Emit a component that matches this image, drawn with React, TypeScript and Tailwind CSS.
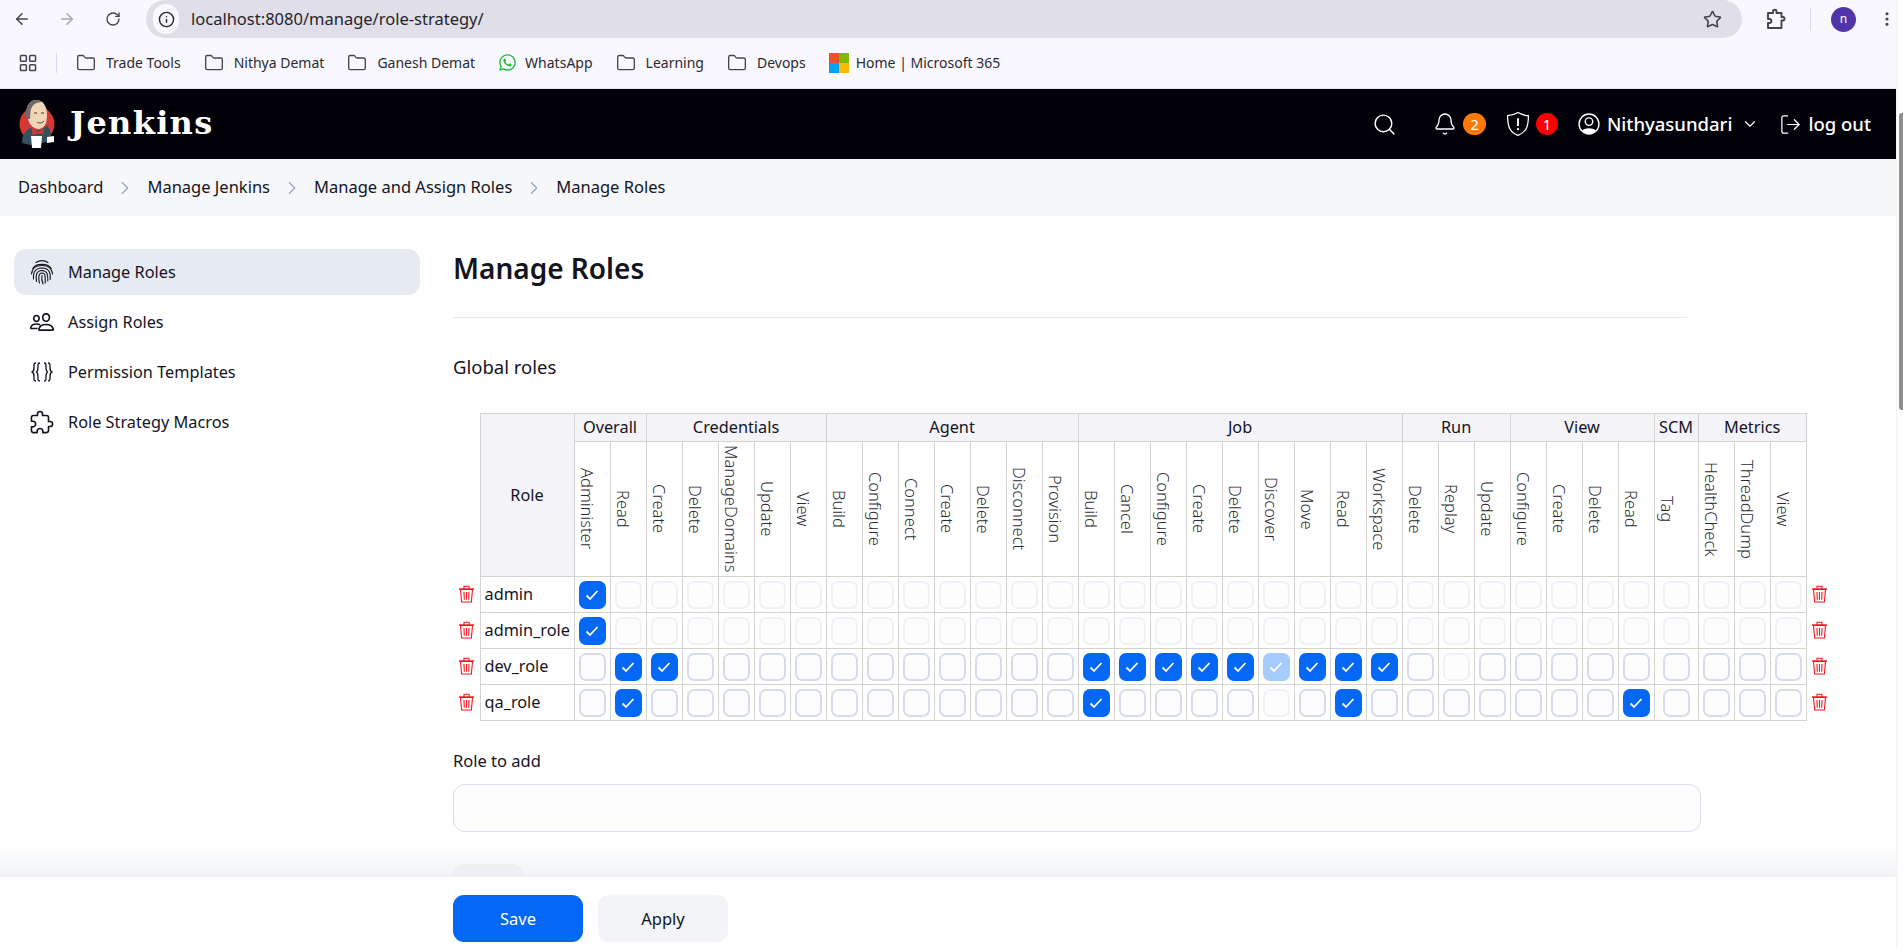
import { Search, Bell, ChevronDown, ChevronRight, LogOut, ArrowLeft, ArrowRight, RotateCw, Star, EllipsisVertical, Info, Folder, LayoutGrid } from "lucide-react";
import { FaWhatsapp } from "react-icons/fa";

type Cell = "on" | "off" | "faded" | "onFaded";

type Group = {
  readonly name: string;
  readonly perms: readonly string[];
};

const groups: readonly Group[] = [
  { name: "Overall", perms: ["Administer", "Read"] },
  { name: "Credentials", perms: ["Create", "Delete", "ManageDomains", "Update", "View"] },
  { name: "Agent", perms: ["Build", "Configure", "Connect", "Create", "Delete", "Disconnect", "Provision"] },
  { name: "Job", perms: ["Build", "Cancel", "Configure", "Create", "Delete", "Discover", "Move", "Read", "Workspace"] },
  { name: "Run", perms: ["Delete", "Replay", "Update"] },
  { name: "View", perms: ["Configure", "Create", "Delete", "Read"] },
  { name: "SCM", perms: ["Tag"] },
  { name: "Metrics", perms: ["HealthCheck", "ThreadDump", "View"] },
];

const perms = groups.flatMap((g) => g.perms.map((p) => ({ group: g.name, perm: p })));

// index into perms: 0 administer, 1 read, 2 cred create, 14-22 job, 24 replay, 29 view read
const jobIdx = [14, 15, 16, 17, 18, 20, 21, 22];

function rowCells(name: string): Cell[] {
  return perms.map((_, i) => {
    if (name === "admin" || name === "admin_role") {
      return i === 0 ? "on" : "faded";
    }
    if (name === "dev_role") {
      if (i === 1 || i === 2 || jobIdx.includes(i)) return "on";
      if (i === 19) return "onFaded";
      if (i === 24) return "faded";
      return "off";
    }
    if (i === 1 || i === 14 || i === 21 || i === 29) return "on";
    if (i === 19) return "faded";
    return "off";
  });
}

const roles = ["admin", "admin_role", "dev_role", "qa_role"];

function TrashIcon() {
  return (
    <svg width="17" height="18" viewBox="0 0 17 18" fill="none" stroke="#f5141e" strokeWidth="1.1" className="mx-auto mb-[2px]">
      <path d="M2.5 4.5 L3.6 17 H13.4 L14.5 4.5 Z" />
      <path d="M1 4 H16" strokeWidth="1.4" />
      <path d="M6 4 V1.2 H11 V4" />
      <path d="M6 7 L6.3 14.8 M8.5 7 V14.8 M11 7 L10.7 14.8" />
    </svg>
  );
}

function CheckBox({ state }: { state: Cell }) {
  const base = "mx-auto flex h-[28px] w-[27px] items-center justify-center rounded-[7px]";
  if (state === "on" || state === "onFaded") {
    return (
      <div className={`${base} ${state === "on" ? "bg-[#0468f5]" : "bg-[#a6cbfd]"}`}>
        <svg width="14" height="12" viewBox="0 0 14 12" fill="none" stroke="white" strokeWidth="1.8">
          <path d="M1.5 6.5 L5 10 L12.5 2" />
        </svg>
      </div>
    );
  }
  return (
    <div
      className={`${base} border-2 bg-[#fdfdfe] ${state === "off" ? "border-[#d6dcea]" : "border-[#f0f2f8]"}`}
    />
  );
}

function FingerprintIcon() {
  return (
    <svg width="24" height="26" viewBox="0 0 24 26" fill="none" stroke="#14141f" strokeWidth="1.1" strokeLinecap="round" className="shrink-0">
      <path d="M6 3.5 C9.5 1 14.5 1 18 3.5" />
      <path d="M2.8 9.5 C6 4 18 4 21.2 9.5" />
      <path d="M1.5 15 C2 9 7 6.5 12 6.5 C17 6.5 22 9 22.5 15" />
      <path d="M3.5 20 C3 16 3.5 9.2 12 9 C20 9.2 20.8 15 20.2 20.5" />
      <path d="M6.5 22.5 C5.5 17 6 11.7 12 11.5 C17.5 11.7 18 16 17.8 22" />
      <path d="M9.5 24 C8.5 20 8 14.2 12 14 C15.5 14 15.5 18 15.2 24" />
      <path d="M12 16.5 C11.5 19 11.8 22 13 25" />
    </svg>
  );
}

function PeopleIcon() {
  return (
    <svg width="26" height="26" viewBox="0 0 512 512" fill="none" stroke="#14141f" strokeWidth="32" strokeLinecap="round" strokeLinejoin="round" className="shrink-0">
      <path d="M402 168c-2.93 40.67-33.1 72-66 72s-63.12-31.32-66-72c-3-42.31 26.37-72 66-72s69 30.46 66 72z" />
      <path d="M336 304c-65.17 0-127.84 32.37-143.54 95.41-2.08 8.34 3.15 16.59 11.72 16.59h263.65c8.57 0 13.77-8.25 11.72-16.59C463.85 335.36 401.18 304 336 304z" strokeMiterlimit="10" />
      <path d="M200 185.94c-2.34 32.48-26.72 58.06-53 58.06s-50.7-25.57-53-58.06C91.61 152.15 115.34 128 147 128s55.39 24.77 53 57.94z" />
      <path d="M206 306c-18.05-8.27-37.93-11.45-59-11.45-52 0-102.1 25.85-114.65 76.2-1.65 6.66 2.53 13.25 9.37 13.25H154" strokeMiterlimit="10" />
    </svg>
  );
}

function PuzzleIcon() {
  return (
    <svg width="26" height="26" viewBox="0 0 512 512" fill="none" stroke="#14141f" strokeWidth="32" strokeLinecap="round" strokeLinejoin="round" className="shrink-0">
      <path d="M413.66 246.1H386a2 2 0 01-2-2v-77.24A38.86 38.86 0 00345.14 128H267.9a2 2 0 01-2-2V98.34c0-27.14-21.5-49.86-48.64-50.33a49.53 49.53 0 00-50.4 49.51V126a2 2 0 01-2 2H87.62A39.74 39.74 0 0048 167.62V238a2 2 0 002 2h26.91c29.37 0 53.68 25.48 54.09 54.85.42 29.87-23.51 57.15-53.29 57.15H50a2 2 0 00-2 2v70.38A39.74 39.74 0 0087.62 464H158a2 2 0 002-2v-20.93c0-30.28 24.75-56.35 55-57.06 30.1-.7 57 20.31 57 50.28V462a2 2 0 002 2h71.14A38.86 38.86 0 00384 425.14v-78a2 2 0 012-2h28.48c27.63 0 49.52-22.67 49.52-50.4s-23.2-48.64-50.34-48.64z" />
    </svg>
  );
}

function ExtensionIcon() {
  return (
    <svg width="20" height="22" viewBox="0 0 20 22" fill="none" stroke="#45444c" strokeWidth="1.9" strokeLinejoin="round" className="shrink-0">
      <path d="M2 5 H7 V3.2 C7 1.2 10.5 1.2 10.5 3.2 V5 H15.5 V9 H17 C19 9 19 12.5 17 12.5 H15.5 V20 H2 V15 H3.5 C6 15 6 11 3.5 11 H2 Z" />
    </svg>
  );
}

function BracesIcon() {
  return (
    <svg width="24" height="24" viewBox="0 0 24 24" fill="none" stroke="#14141f" strokeWidth="1.3" className="shrink-0">
      <path d="M6 3 C3.5 3 4 5 4 7 C4 10 4 11 2 12 C4 13 4 14 4 17 C4 19 3.5 21 6 21" />
      <path d="M10 3 C7.5 3 8 5 8 7 C8 10 8 11 6.5 12 C8 13 8 14 8 17 C8 19 7.5 21 10 21" />
      <path d="M14 3 C16.5 3 16 5 16 7 C16 10 16 11 17.5 12 C16 13 16 14 16 17 C16 19 16.5 21 14 21" />
      <path d="M18 3 C20.5 3 20 5 20 7 C20 10 20 11 22 12 C20 13 20 14 20 17 C20 19 20.5 21 18 21" />
    </svg>
  );
}

function JenkinsLogo() {
  return (
    <svg width="38" height="50" viewBox="0 0 38 50" className="shrink-0">
      <circle cx="19" cy="25" r="17.5" fill="#d33833" />
      <path d="M9 15 C9 6 12 1 18 1 C25 1 29 7 29 16 C29 24 27 29 21 30 C15 30 10 25 9 15 Z" fill="#f0d6b7" />
      <path d="M9 20 C6 10 10 1 18 1 C21 1 23 2 24 3 C17 3 13 7 12.5 13 L12 20 Z" fill="#6d6b6d" />
      <path d="M4 44 C4 37 6 33 12 29 L20 32 L29 27 C32 29 33 33 33 37 L29 43 L12 46 Z" fill="#335061" />
      <path d="M14 30 L20 33 L26 29.5 L25.5 35 L20 34.5 L14.5 36 Z" fill="#d33833" />
      <path d="M13 37 H24 L23 49 H14 Z" fill="#ffffff" />
      <path d="M29 38 L36 37 V43 L29 44 Z" fill="#ffffff" />
      <path d="M16 14 H19 M23 14 H26 M19 23 C21 24.5 24 24.5 26 22" stroke="#49332a" strokeWidth="1" fill="none" />
    </svg>
  );
}

function ShieldAlert() {
  return (
    <svg width="24" height="26" viewBox="0 0 23 25" fill="none" stroke="white" strokeWidth="1.2" className="shrink-0">
      <path d="M11.5 1.5 C8 3.5 5 4.5 1.5 4.5 C1.5 14 3 20 11.5 23.5 C20 20 21.5 14 21.5 4.5 C18 4.5 15 3.5 11.5 1.5 Z" />
      <path d="M11.5 7 V14.5" strokeWidth="1.8" />
      <circle cx="11.5" cy="17.5" r="1.1" fill="white" stroke="none" />
    </svg>
  );
}

function UserCircle() {
  return (
    <svg width="22" height="22" viewBox="0 0 21 21" className="shrink-0">
      <circle cx="10.5" cy="10.5" r="9.5" fill="none" stroke="white" strokeWidth="1.3" />
      <circle cx="10.5" cy="8.2" r="3.6" fill="none" stroke="white" strokeWidth="1.3" />
      <path d="M3.8 17 C5.5 13.8 15.5 13.8 17.2 17 C14.5 21 6.5 21 3.8 17 Z" fill="white" />
    </svg>
  );
}

function MicrosoftTiles() {
  return (
    <div className="grid h-[20px] w-[20px] shrink-0 grid-cols-2 gap-0">
      <span className="bg-[#f25022]" />
      <span className="bg-[#7fba00]" />
      <span className="bg-[#00a4ef]" />
      <span className="bg-[#ffb900]" />
    </div>
  );
}

function BrowserChrome() {
  const bookmarks = ["Trade Tools", "Nithya Demat", "Ganesh Demat"];
  return (
    <div className="h-[89px] shrink-0 border-b border-[#e8e6f0] bg-[#faf8ff]">
      <div className="flex h-[38px] items-center">
        <div className="flex w-[146px] shrink-0 items-center pl-[13px] text-[#45444c]">
          <ArrowLeft size={18} strokeWidth={2} />
          <ArrowRight size={18} strokeWidth={2} className="ml-[27px] text-[#a7a6ae]" />
          <RotateCw size={16} strokeWidth={2} className="ml-[29px]" />
        </div>
        <div className="flex h-[38px] w-[1596px] shrink-0 items-center rounded-r-[20px] rounded-l-[20px] bg-[#e0dee8] pl-[7px]">
          <div className="flex h-[30px] w-[26px] items-center justify-center rounded-full bg-[#faf8ff]">
            <Info size={17} strokeWidth={2} className="text-[#25242a]" />
          </div>
          <span className="ml-[12px] text-[16.5px] text-[#26252b]">localhost:8080/manage/role-strategy/</span>
          <Star size={19} strokeWidth={2} className="mr-[20px] ml-auto text-[#45444c]" />
        </div>
        <div className="ml-[24px] flex items-center">
          <ExtensionIcon />
          <span className="ml-[24px] h-[22px] w-px bg-[#dcdaf0]" />
          <span className="ml-[20px] flex h-[25px] w-[25px] items-center justify-center rounded-full bg-[#5035a9] text-[12px] text-white">
            n
          </span>
          <EllipsisVertical size={18} strokeWidth={2.2} className="ml-[22px] text-[#45444c]" />
        </div>
      </div>
      <div className="flex h-[49px] items-center pl-[18px] text-[14px] text-[#2b2a30]">
        <LayoutGrid size={20} strokeWidth={1.8} className="text-[#45444c]" />
        <span className="mr-[19px] ml-[18px] h-[20px] w-px bg-[#dcdaf0]" />
        <div className="flex items-center gap-[23px]">
          {bookmarks.map((b) => (
            <span key={b} className="flex items-center gap-[10px]">
              <Folder size={20} strokeWidth={1.6} className="text-[#45444c]" />
              {b}
            </span>
          ))}
          <span className="flex items-center gap-[8px]">
            <FaWhatsapp size={19} className="text-[#25b83f]" />
            WhatsApp
          </span>
          <span className="flex items-center gap-[10px]">
            <Folder size={20} strokeWidth={1.6} className="text-[#45444c]" />
            Learning
          </span>
          <span className="flex items-center gap-[10px]">
            <Folder size={20} strokeWidth={1.6} className="text-[#45444c]" />
            Devops
          </span>
          <span className="flex items-center gap-[7px]">
            <MicrosoftTiles />
            Home | Microsoft 365
          </span>
        </div>
      </div>
    </div>
  );
}

function JenkinsHeader() {
  return (
    <header className="flex h-[70px] shrink-0 items-center bg-[#02010a] pr-[25px] pl-[18px] text-white">
      <JenkinsLogo />
      <span className="mb-[3px] ml-[14px] font-['DejaVu_Serif',serif] text-[32px] font-bold tracking-[1.3px]">
        Jenkins
      </span>
      <div className="ml-auto flex items-center text-[18.5px] font-medium">
        <Search size={25} strokeWidth={1.4} />
        <Bell size={24} strokeWidth={1.3} className="ml-[36px]" />
        <span className="ml-[6px] flex h-[22px] w-[23px] items-center justify-center rounded-full bg-[#fe7a03] text-[15px] font-normal">
          2
        </span>
        <span className="ml-[20px]">
          <ShieldAlert />
        </span>
        <span className="ml-[6px] flex h-[22px] w-[22px] items-center justify-center rounded-full bg-[#fe0000] text-[15px] font-normal">
          1
        </span>
        <span className="ml-[20px]">
          <UserCircle />
        </span>
        <span className="ml-[7px]">Nithyasundari</span>
        <ChevronDown size={18} strokeWidth={1.5} className="ml-[9px]" />
        <LogOut size={23} strokeWidth={1.3} className="ml-[20px]" />
        <span className="ml-[6px]">log out</span>
      </div>
    </header>
  );
}

function Breadcrumbs() {
  const crumbs = ["Dashboard", "Manage Jenkins", "Manage and Assign Roles", "Manage Roles"];
  return (
    <nav className="flex h-[57px] shrink-0 items-center bg-[#f6f7f9] pl-[18px] text-[16.5px] text-[#14141f]">
      {crumbs.map((c, i) => (
        <span key={c} className="flex items-center">
          {i > 0 ? <ChevronRight size={22} strokeWidth={1.2} className="mx-[11px] text-[#8fa3bf]" /> : null}
          {c}
        </span>
      ))}
    </nav>
  );
}

function Sidebar() {
  return (
    <aside className="w-[406px] shrink-0 pt-[33px] text-[16.3px] text-[#14141f]">
      <div className="flex h-[46px] items-center gap-[14px] rounded-[12px] bg-[#e6eaf2] pl-[16px]">
        <FingerprintIcon />
        Manage Roles
      </div>
      <div className="mt-[4px] flex h-[46px] items-center gap-[13px] pl-[15px]">
        <PeopleIcon />
        Assign Roles
      </div>
      <div className="mt-[4px] flex h-[46px] items-center gap-[14px] pl-[16px]">
        <BracesIcon />
        Permission Templates
      </div>
      <div className="mt-[4px] flex h-[46px] items-center gap-[13px] pl-[15px]">
        <PuzzleIcon />
        Role Strategy Macros
      </div>
    </aside>
  );
}

function RolesTable() {
  const cellBorder = "border border-[#d3d3cf]";
  return (
    <table className="w-[1369px] table-fixed border-collapse text-[16.3px] text-[#14141f]">
      <colgroup>
        <col className="w-[27px]" />
        <col className="w-[94px]" />
        {perms.map((p, i) => (
          <col key={i} className={p.group === "SCM" ? "w-[44px]" : "w-[36px]"} />
        ))}
        <col className="w-[27px]" />
      </colgroup>
      <thead>
        <tr className="h-[28px]">
          <th />
          <th rowSpan={2} className={`${cellBorder} bg-[#f3f3f8] font-normal`}>
            Role
          </th>
          {groups.map((g) => (
            <th key={g.name} colSpan={g.perms.length} className={`${cellBorder} bg-[#f3f3f8] p-0 font-normal`}>
              {g.name}
            </th>
          ))}
          <th />
        </tr>
        <tr className="h-[135px]">
          <th />
          {perms.map((p, i) => (
            <th key={i} className={`${cellBorder} p-0 font-light text-[#2c2c33]`}>
              <span className="mx-auto block w-fit text-[16.5px] font-light [writing-mode:vertical-rl]">{p.perm}</span>
            </th>
          ))}
          <th />
        </tr>
      </thead>
      <tbody>
        {roles.map((role) => (
          <tr key={role} className="h-[36px]">
            <td className="p-0">
              <TrashIcon />
            </td>
            <td className={`${cellBorder} py-0 pl-[4px]`}>{role}</td>
            {rowCells(role).map((state, i) => (
              <td key={i} className={`${cellBorder} p-0`}>
                <CheckBox state={state} />
              </td>
            ))}
            <td className="p-0">
              <TrashIcon />
            </td>
          </tr>
        ))}
      </tbody>
    </table>
  );
}

function ActionBar() {
  return (
    <div className="absolute right-0 bottom-0 left-0 h-[71px] bg-white">
      <div className="absolute right-0 bottom-[71px] left-0 h-[33px] bg-gradient-to-b from-white/0 to-[#eff1f5]/90" />
      <div className="flex gap-[15px] pt-[18px] pl-[453px] text-[16.5px]">
        <button type="button" className="h-[47px] w-[130px] rounded-[11px] bg-[#0468f5] pt-[2px] text-white">
          Save
        </button>
        <button type="button" className="h-[47px] w-[130px] rounded-[11px] bg-[#f2f4f7] pt-[2px] text-[#14141f]">
          Apply
        </button>
      </div>
    </div>
  );
}

export default function App() {
  return (
    <div className="relative flex h-[948px] w-[1903px] overflow-hidden bg-white font-['Noto_Sans',sans-serif]">
      <div className="relative flex w-[1896px] shrink-0 flex-col">
        <BrowserChrome />
        <JenkinsHeader />
        <Breadcrumbs />
        <div className="flex pl-[14px]">
          <Sidebar />
          <main className="ml-[33px] w-[1248px] shrink-0">
            <h1 className="mt-[32px] text-[28px] leading-[40px] font-semibold text-[#14141f]">Manage Roles</h1>
            <hr className="mt-[29px] w-[1234px] border-[#e8e9ec]" />
            <h2 className="mt-[37px] text-[18.5px] leading-[24px] text-[#14141f]">Global roles</h2>
            <div className="mt-[34px]">
              <RolesTable />
            </div>
            <div className="mt-[28px] text-[16.5px] leading-[24px] text-[#14141f]">Role to add</div>
            <div className="mt-[11px] h-[48px] w-[1248px] rounded-[12px] border border-[#d9deeb] bg-[#fdfdfe]" />
            <div className="mt-[32px] h-[40px] w-[71px] rounded-[11px] bg-[#e9ecf1]" />
          </main>
        </div>
        <ActionBar />
      </div>
      <div className="relative w-[7px] shrink-0 border-l border-[#f4f4f6] bg-white pt-[113px]">
        <div className="ml-auto h-[297px] w-[4px] rounded-l-[3px] bg-[#8f8f8f]" />
      </div>
    </div>
  );
}
